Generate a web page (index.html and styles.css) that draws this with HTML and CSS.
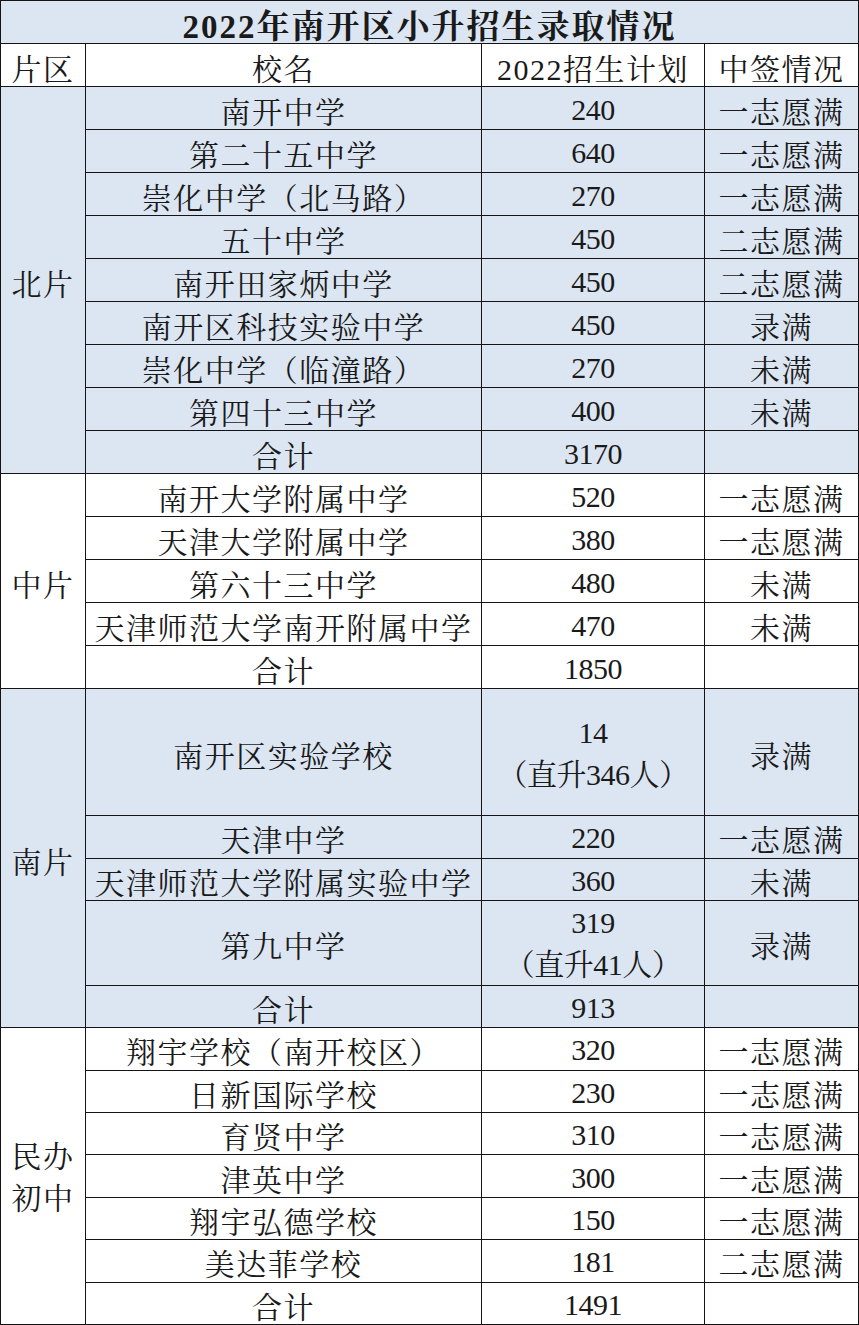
FILE: index.html
```html
<!DOCTYPE html>
<html lang="zh-CN">
<head>
<meta charset="utf-8">
<title>2022年南开区小升招生录取情况</title>
<link rel="stylesheet" href="styles.css">
</head>
<body>
<div class="sheet">
  <div class="c title b">2022年南开区小升招生录取情况</div>

  <div class="c">片区</div>
  <div class="c">校名</div>
  <div class="c">2022招生计划</div>
  <div class="c">中签情况</div>

  <div class="c b span9">北片</div>
  <div class="c b">南开中学</div><div class="c b num">240</div><div class="c b">一志愿满</div>
  <div class="c b">第二十五中学</div><div class="c b num">640</div><div class="c b">一志愿满</div>
  <div class="c b">崇化中学（北马路）</div><div class="c b num">270</div><div class="c b">一志愿满</div>
  <div class="c b">五十中学</div><div class="c b num">450</div><div class="c b">二志愿满</div>
  <div class="c b">南开田家炳中学</div><div class="c b num">450</div><div class="c b">二志愿满</div>
  <div class="c b">南开区科技实验中学</div><div class="c b num">450</div><div class="c b">录满</div>
  <div class="c b">崇化中学（临潼路）</div><div class="c b num">270</div><div class="c b">未满</div>
  <div class="c b">第四十三中学</div><div class="c b num">400</div><div class="c b">未满</div>
  <div class="c b">合计</div><div class="c b num">3170</div><div class="c b"></div>

  <div class="c span5">中片</div>
  <div class="c">南开大学附属中学</div><div class="c num">520</div><div class="c">一志愿满</div>
  <div class="c">天津大学附属中学</div><div class="c num">380</div><div class="c">一志愿满</div>
  <div class="c">第六十三中学</div><div class="c num">480</div><div class="c">未满</div>
  <div class="c">天津师范大学南开附属中学</div><div class="c num">470</div><div class="c">未满</div>
  <div class="c">合计</div><div class="c num">1850</div><div class="c"></div>

  <div class="c b span8">南片</div>
  <div class="c b span3">南开区实验学校</div><div class="c b num span3 stack"><span>14</span><span>（直升346人）</span></div><div class="c b span3">录满</div>
  <div class="c b">天津中学</div><div class="c b num">220</div><div class="c b">一志愿满</div>
  <div class="c b">天津师范大学附属实验中学</div><div class="c b num">360</div><div class="c b">未满</div>
  <div class="c b span2">第九中学</div><div class="c b num span2 stack"><span>319</span><span>（直升41人）</span></div><div class="c b span2">录满</div>
  <div class="c b">合计</div><div class="c b num">913</div><div class="c b"></div>

  <div class="c span7 stack"><span>民办</span><span>初中</span></div>
  <div class="c">翔宇学校（南开校区）</div><div class="c num">320</div><div class="c">一志愿满</div>
  <div class="c">日新国际学校</div><div class="c num">230</div><div class="c">一志愿满</div>
  <div class="c">育贤中学</div><div class="c num">310</div><div class="c">一志愿满</div>
  <div class="c">津英中学</div><div class="c num">300</div><div class="c">一志愿满</div>
  <div class="c">翔宇弘德学校</div><div class="c num">150</div><div class="c">一志愿满</div>
  <div class="c">美达菲学校</div><div class="c num">181</div><div class="c">二志愿满</div>
  <div class="c">合计</div><div class="c num">1491</div><div class="c"></div>
</div>
</body>
</html>
```

FILE: styles.css
```css
html, body {
  margin: 0;
  padding: 0;
  background: #ffffff;
}

.sheet {
  box-sizing: border-box;
  width: 859px;
  height: 1325px;
  display: grid;
  grid-template-columns: 84px 395px 222px 153px;
  grid-template-rows: repeat(16, 42px) repeat(15, 1fr);
  gap: 1px;
  padding: 1px;
  background: #141414;
  font-family: "Liberation Serif", "Noto Serif CJK SC", "Noto Sans CJK SC", serif;
  font-size: 30px;
  color: #1a1a1a;
}

.c {
  background: #ffffff;
  display: flex;
  align-items: center;
  justify-content: center;
  text-align: center;
  white-space: nowrap;
  letter-spacing: 1.5px;
  padding-top: 3px;
  box-sizing: border-box;
  min-height: 0;
}

.b {
  background: #dce6f2;
}

.title {
  grid-column: 1 / -1;
  font-size: 33px;
  font-weight: bold;
  letter-spacing: 2px;
}

.num {
  letter-spacing: -0.5px;
}

.stack {
  flex-direction: column;
  line-height: 42px;
}

.span2 { grid-row: span 2; }
.span3 { grid-row: span 3; }
.span5 { grid-row: span 5; }
.span7 { grid-row: span 7; }
.span8 { grid-row: span 8; }
.span9 { grid-row: span 9; }
```
